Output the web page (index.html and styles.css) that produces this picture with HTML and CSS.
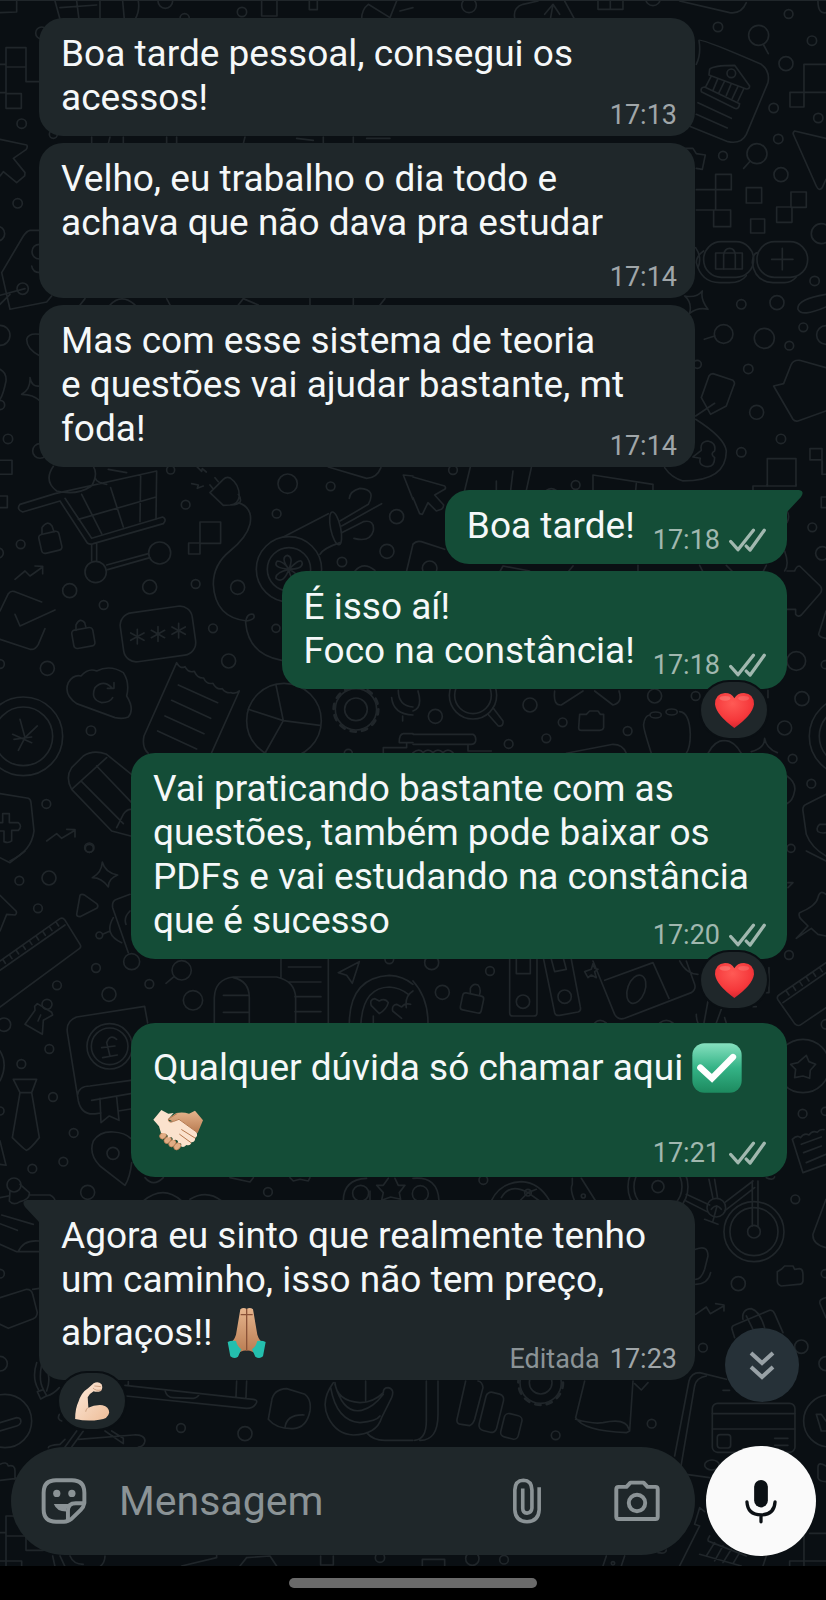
FILE: index.html
```html
<!DOCTYPE html>
<html lang="pt-BR">
<head>
<meta charset="utf-8">
<meta name="viewport" content="width=device-width, initial-scale=1">
<title>Conversa</title>
<link rel="stylesheet" href="styles.css">
</head>
<body>
<svg class="defs" width="0" height="0" aria-hidden="true">
  <defs>
    <linearGradient id="g-check" x1="0" y1="0" x2="0" y2="1"><stop offset="0" stop-color="#86e0bf"/><stop offset=".5" stop-color="#34b386"/><stop offset="1" stop-color="#1d8a5f"/></linearGradient>
    <radialGradient id="g-heart" cx=".45" cy=".3" r=".8"><stop offset="0" stop-color="#ff5a55"/><stop offset=".6" stop-color="#f5383b"/><stop offset="1" stop-color="#c81f2b"/></radialGradient>
    <linearGradient id="g-skin" x1="0" y1="0" x2="1" y2="1"><stop offset="0" stop-color="#fdeadb"/><stop offset="1" stop-color="#eebd98"/></linearGradient>
    <linearGradient id="g-tan" x1="0" y1="0" x2="0" y2="1"><stop offset="0" stop-color="#e6b58d"/><stop offset="1" stop-color="#b87a50"/></linearGradient>
    <symbol id="ticks" viewBox="946 198 118 76"><path d="M954 239L976 264L1023 205M1001 253L1013 265L1056 205" fill="none" stroke="currentColor" stroke-width="10" stroke-linecap="round" stroke-linejoin="round"/></symbol>
    <symbol id="heart" viewBox="0 0 117 105"><path fill="url(#g-heart)" d="M58 105Q4 66 0 34Q0 2 30 0Q50 0 58 16Q67 0 87 0Q117 2 117 34Q113 66 58 105Z"/><ellipse cx="30" cy="16" rx="16" ry="7" fill="#ff9a94" opacity=".4"/><ellipse cx="86" cy="16" rx="16" ry="7" fill="#ff9a94" opacity=".3"/></symbol>
  </defs>
</svg>

<div class="app">
  <svg class="wallpaper" viewBox="0 0 826 1600" preserveAspectRatio="xMidYMin slice" aria-hidden="true">
    <g transform="scale(.3333)">
      <path d="M0 35L50 33V0M165 0L180 55M230 0L237 55M300 0V55M368 0L373 55M180 20L290 12M415 0Q420 30 405 55M785 0V45H831V0M928 0V26H952V0M1085 55Q1085 25 1105 10L1170 50L1190 0M1200 30L1239 20M18 140H78V198H18ZM18 198V278H64V322H18V278M78 198V242H118M0 190H18M0 275H18M0 415L80 432Q84 438 78 446L40 472L75 515L74 525L50 545L10 512L0 525"/>
      <path d="M120 688H90Q80 690 70 705L5 815L30 925L140 903L155 885M0 883L75 863M30 880L0 910M95 795Q98 815 120 815M120 1065Q80 1045 80 1015Q85 995 120 1000M0 1105Q20 1115 18 1140Q10 1180 0 1195M90 1130Q95 1160 120 1155M90 1130Q92 1165 65 1180Q100 1180 120 1200M-10 1378H36V1420H-10"/>
      <path d="M275 408V428M330 408L325 428M370 408V428M500 408V428M530 408V428M735 408L730 428M890 412L940 418M970 408V428M1060 408V428M1100 412H1170M240 912L255 893M330 912Q365 875 405 912M500 893L510 912M715 912L730 893L775 912M930 893V912M1060 893V912M1140 912l15-19"/>
      <circle cx="496" cy="0" r="22"/><circle cx="554" cy="52" r="14"/><circle cx="726" cy="33" r="14"/><circle cx="125" cy="96" r="18"/><circle cx="65" cy="368" r="14"/><circle cx="160" cy="400" r="12"/><circle cx="53" cy="607" r="14"/><circle cx="-8" cy="698" r="22"/><circle cx="68" cy="863" r="17"/><circle cx="118" cy="752" r="22"/><circle cx="0" cy="1003" r="30"/><circle cx="0" cy="1212" r="14"/><circle cx="24" cy="1314" r="14"/><circle cx="120" cy="1350" r="22"/>
    </g>
    <g transform="translate(413 0) scale(.3333)">
      <path d="M305 50Q300 20 330 10L375 0M395 40L420 10L440 40M420 10L412 55M455 0L485 55M555 0V25H630V0M592 0V25M800 0L950 35Q985 40 1000 5M1215 0q0 40 24 35M1052 132L1066 158M1012 480L992 502M1239 190H1173V318H1131V274H1239M1239 412L1145 390Q1138 395 1142 402L1210 555Q1218 572 1228 560L1239 535"/>
      <path d="M850 190Q865 160 858 118Q865 112 1045 190Q1072 210 1065 245L1000 400Q985 430 945 422L828 375M890 205Q900 193 965 193L1010 255Q1010 265 1000 264L888 222ZM875 258L980 308q-2 18-15 14L865 272Q862 258 875 258ZM895 225L878 258M915 232L900 268M935 240L918 275M955 248L940 283M975 256L958 292M992 264L975 300M855 305L955 352M850 340L943 381"/>
      <path d="M815 442H840L850 458L877 462L868 505L850 502M908 520H955V566H850M908 520V627M850 627H902M902 627h51v50h-51zM1000 560h46v46h-46zM1134 573h46v46h-46zM1091 618h46v46h-46zM1013 654h42v42h-42z"/>
      <rect x="872" y="722" width="150" height="107" rx="53"/><rect x="1032" y="722" width="152" height="107" rx="53"/><rect x="908" y="756" width="80" height="48"/>
      <path d="M848 740Q868 770 855 800M872 750Q850 765 850 785Q865 845 920 845H950Q985 845 1000 824M932 804V762Q935 742 950 742Q965 742 967 762V804M1035 755Q1020 755 1018 785Q1025 842 1080 845H1115Q1135 845 1150 828M1076 775H1140M1108 742V806"/>
      <path d="M868 870Q862 895 885 925Q855 918 830 937Q838 905 815 885Q850 892 868 870ZM1239 880Q1150 895 1155 925Q1165 950 1239 918M905 1005L874 1015M900 1118L960 1138Q968 1145 962 1155L940 1215L893 1240L865 1190L888 1125Q892 1118 900 1118ZM905 1207L848 1245M1239 1100L1160 1078Q1142 1076 1135 1090L1112 1148L1082 1155L1140 1255Q1145 1262 1155 1260L1239 1230M848 1255Q935 1310 940 1350Q940 1440 810 1440Q775 1430 755 1400M840 1368L865 1348Q860 1322 885 1320Q910 1325 905 1350Q890 1358 905 1370Q905 1397 885 1397Q855 1395 862 1372ZM1063 1455V1373H1149V1455M1191 1343h36v34h-36zM1227 1377V1420H1239"/>
      <circle cx="168" cy="13" r="22"/><circle cx="720" cy="-8" r="22"/><circle cx="1127" cy="39" r="13"/><circle cx="915" cy="78" r="14"/><circle cx="1037" cy="103" r="30"/><circle cx="1197" cy="119" r="14"/><circle cx="1119" cy="188" r="21"/><circle cx="1082" cy="321" r="14"/><circle cx="1216" cy="351" r="14"/><circle cx="1096" cy="414" r="14"/><circle cx="930" cy="464" r="13"/><circle cx="1032" cy="458" r="30"/><circle cx="1104" cy="521" r="21"/><circle cx="955" cy="217" r="13"/><circle cx="1225" cy="698" r="30"/><circle cx="1205" cy="840" r="14"/><circle cx="985" cy="910" r="14"/><circle cx="1092" cy="905" r="21"/><circle cx="1171" cy="979" r="13"/><circle cx="932" cy="999" r="28"/><circle cx="1054" cy="1012" r="30"/><circle cx="1129" cy="1034" r="13"/><circle cx="1239" cy="1002" r="28"/><circle cx="1006" cy="1104" r="14"/><circle cx="853" cy="1090" r="12"/><circle cx="1031" cy="1234" r="21"/><circle cx="1104" cy="1314" r="14"/><circle cx="985" cy="1354" r="14"/>
    </g>
    <g transform="translate(0 460) scale(.3333)">
      <path d="M-10 105H22V140H-10M160 16Q130 60 170 90Q230 105 275 75Q295 40 280 16M285 50Q290 65 320 70M325 25L380 35M165 98L60 130Q48 145 68 153L180 120M165 98L470 30L468 175M180 120L262 246Q270 252 280 248L490 188Q502 175 488 168L275 232L195 112M245 100L305 218M332 80L370 198M422 45L420 182M235 175L468 108M275 250V300M290 248V298M320 312L445 278M323 326L450 290"/>
      <rect x="120" y="215" width="62" height="58" rx="10" transform="rotate(-13 151 244)"/><path d="M126 220V200Q142 176 156 195L162 212M45 355L75 330L90 345L128 318M105 315L128 316V338M0 450L25 398Q32 388 45 392L125 423M45 460L60 495L165 447M0 535L90 565Q105 568 115 550L135 503"/>
      <path d="M600 183h62v64h-62zM566 246h34v33h-34zM630 95L670 55Q680 45 692 52Q718 70 718 105Q715 130 690 132L670 133ZM638 82l-8-10M655 62l-10-12M715 100Q735 130 695 132M715 125Q760 140 750 190Q740 230 690 270Q640 310 640 370Q645 470 740 480Q770 475 760 460Q740 455 737 485Q745 580 845 598M575 68L595 72L592 82L610 75M590 16l15 15l2-8l12 10"/>
      <path d="M867 325Q840 290 862 283Q882 288 867 325Q905 285 907 308Q905 325 867 325Q905 345 888 358Q870 355 867 325Q850 370 828 352Q825 335 867 325Q815 320 832 300Q850 300 867 325M850 228L985 158M960 280Q970 262 1020 245M1020 180L1105 130Q1130 85 1080 82Q1050 90 1048 112M1025 195L1145 128M1025 215L1090 182Q1125 175 1120 210Q1110 245 1062 232M1065 330Q1090 300 1125 328M985 18L1100 52Q1130 52 1143 20M1239 45L1210 42L1239 115M1239 250L1220 330"/><ellipse cx="1007" cy="202" rx="15" ry="50" transform="rotate(-12 1007 202)"/>
      <rect x="218" y="503" width="64" height="56" rx="10" transform="rotate(-10 250 531)"/><path d="M228 508V492Q240 468 254 485L258 500"/><rect x="365" y="445" width="218" height="148" rx="38" transform="rotate(-8 474 519)"/>
      <path d="M412 505V549M392 516L432 538M392 538L432 516M474 497V541M454 508L494 530M454 530L494 508M536 487V531M516 498L556 520M516 520L556 498"/>
      <path d="M205 665Q220 640 243 645Q265 620 290 630Q330 610 370 635Q390 665 380 705Q405 745 385 768Q370 775 345 770L230 728Q190 700 205 665ZM335 680Q310 655 285 680Q270 715 305 725Q330 725 338 710M342 665V682H322M445 877Q425 860 432 825L530 605q10 20 25 12q10 20 28 14q10 22 28 20q8 20 28 16q10 20 28 16q10 14 26 12q14 5 25-5L635 875M535 672L653 725M515 718L632 772M495 765L612 818M473 810L590 864M828 672L850 779L745 745M850 779L960 793M850 779L797 873"/>
      <circle cx="852" cy="779" r="112"/><circle cx="1068" cy="745" r="34"/><circle cx="1068" cy="745" r="62"/><circle class="teeth" cx="1068" cy="745" r="67"/>
      <path d="M1175 710Q1180 760 1239 762M1195 688Q1195 735 1239 738M1208 765V780M1239 818H1210Q1197 820 1198 845H1239M1150 877V860H1220V845M60 775L75 830L112 795M75 830L55 868M38 820L95 845M42 835L95 828M400 945L320 880Q280 865 250 885L215 920Q195 950 215 985L335 1110L392 1125M215 985L320 890M290 915L395 1025M245 962L370 1088M350 1100L370 1060Q380 1045 392 1045M0 998L85 1012Q92 1015 93 1025L102 1110Q95 1170 30 1200M0 1085H8V1058H28V1085H55Q68 1095 55 1108H35V1140Q25 1148 12 1142V1110H0M140 1140L170 1118L185 1132L225 1108M200 1105L225 1106V1128"/>
      <circle cx="70" cy="826" r="118"/><circle cx="70" cy="826" r="88"/><circle cx="287" cy="333" r="32"/><circle cx="479" cy="276" r="33"/><circle cx="62" cy="250" r="13"/><circle cx="-5" cy="276" r="15"/><circle cx="867" cy="325" r="98"/><circle cx="867" cy="325" r="65"/><circle cx="209" cy="389" r="21"/><circle cx="311" cy="432" r="13"/><circle cx="449" cy="378" r="21"/><circle cx="587" cy="369" r="13"/><circle cx="713" cy="379" r="21"/><circle cx="557" cy="131" r="13"/><circle cx="512" cy="27" r="12"/><circle cx="863" cy="68" r="29"/><circle cx="992" cy="76" r="13"/><circle cx="830" cy="158" r="13"/><circle cx="1190" cy="167" r="21"/><circle cx="1161" cy="271" r="21"/><circle cx="1026" cy="303" r="14"/><circle cx="639" cy="502" r="13"/><circle cx="686" cy="600" r="21"/><circle cx="828" cy="502" r="12"/><circle cx="142" cy="622" r="21"/><circle cx="0" cy="609" r="13"/><circle cx="273" cy="809" r="14"/><circle cx="139" cy="1029" r="13"/><circle cx="268" cy="1160" r="14"/><circle cx="1045" cy="877" r="12"/>
    </g>
    <g transform="translate(413 460) scale(.3333)">
      <path d="M0 48L95 75Q100 80 95 85L65 102L92 132Q92 140 85 145L70 150L45 125L28 160L20 158L0 110M155 88L172 18M250 60V88M300 30L293 88M355 20L340 88M540 88V42L720 70V88M670 68L668 88M400 88q15-10 30 0M1149 70V75H1020V88M1063 70V75M1228 0V40M1239 108H1225V140H1239M1122 150q10 15 0 35M0 250Q10 238 25 242L95 265M260 333L270 315L350 330M465 333L480 315M675 313V333M860 313l10 20M940 313l20 20M1060 313l-10 20M1115 270q15 40 0 60M1122 330H1145Q1150 315 1160 315L1222 375Q1230 385 1222 397L1165 462Q1155 470 1148 460V445H1122M1239 450L1217 520Q1220 530 1239 532"/>
      <path d="M15 690Q30 740 0 750M240 740L270 780Q272 797 256 795L225 760M425 690Q420 735 445 732L510 690M545 690L600 732Q630 725 618 690M500 760H520L530 750H555L562 760H572V800Q570 808 560 808H505Q497 808 497 800ZM0 820H180Q190 825 188 840Q185 852 170 850H0M0 875q20-15 30 0q15-15 30 0q15-15 30 0q15-15 30 0M165 852V870H235M460 877L600 850Q630 850 640 877M715 877Q690 800 692 790Q695 765 710 762M800 752Q830 755 832 820Q832 860 820 877M885 877Q905 838 935 838Q965 840 985 877M1015 872Q1055 862 1055 832Q1060 862 1093 875M1065 688V710M1122 945Q1150 965 1145 990Q1140 1020 1122 1028M1239 1000L1180 1030Q1168 1035 1170 1050L1180 1120Q1195 1160 1239 1185M1239 1090H1220Q1208 1100 1215 1112Q1225 1118 1239 1115"/>
      <ellipse cx="728" cy="762" rx="17" ry="9"/><ellipse cx="776" cy="753" rx="17" ry="9"/><circle cx="180" cy="703" r="71"/><circle cx="180" cy="703" r="55"/><circle cx="120" cy="27" r="13"/><circle cx="488" cy="72" r="13"/><circle cx="1198" cy="199" r="13"/><circle cx="1228" cy="277" r="20"/><circle cx="50" cy="322" r="22"/><circle cx="1150" cy="600" r="28"/><circle cx="1237" cy="611" r="12"/><circle cx="351" cy="732" r="21"/><circle cx="67" cy="766" r="21"/><circle cx="449" cy="784" r="13"/><circle cx="400" cy="832" r="13"/><circle cx="287" cy="849" r="13"/><circle cx="644" cy="810" r="13"/><circle cx="725" cy="705" r="21"/><circle cx="848" cy="705" r="13"/><circle cx="1115" cy="801" r="21"/><circle cx="1167" cy="713" r="21"/><circle cx="1139" cy="893" r="13"/><circle cx="1307" cy="826" r="118"/><circle cx="1307" cy="826" r="88"/><circle cx="1195" cy="968" r="13"/><circle cx="1134" cy="1162" r="12"/>
    </g>
    <g transform="translate(0 850) scale(.3333)">
      <path d="M0 20L30 35L75 0M307 33Q315 65 353 72Q325 82 325 108Q305 80 277 80Q305 65 307 33ZM240 133Q245 127 255 133L290 158Q297 165 290 172L240 197Q230 197 230 190ZM0 133L48 180Q52 188 45 192L20 190L0 240M0 330L180 203Q188 198 194 206L240 280Q245 288 238 293L0 468M0 358L195 222M8 325l8 12M28 311l8 12M48 297l8 12M68 283l8 12M88 269l8 12M108 255l8 12M128 241l8 12M148 227l8 12M168 213l8 12"/>
      <path d="M390 130L350 145Q335 150 338 170L385 305M308 250L330 240M340 200Q310 250 365 275M390 180Q370 200 378 220M522 377L498 397M75 520L105 478L104 466L112 458L155 484L158 492L130 508L127 550ZM122 492l-8 18M443 516L434 466L230 498Q195 510 203 550L235 750Q245 795 290 788L303 786M355 780L392 774M232 735Q235 705 270 705L392 688M275 748L392 728M300 742L303 815L328 795L357 808L350 738M350 565Q330 548 320 575L330 615M305 590L345 585M308 620L352 612M40 685H110L95 725H60ZM60 725L37 860Q75 898 80 898Q90 895 118 860L95 725M0 600Q25 640 0 690M0 870L18 943L0 940M395 935Q390 980 375 1003L300 945Q265 910 280 870Q300 840 340 843Q375 845 392 862"/>
      <path d="M30 1020L28 1050Q40 1065 60 1052Q90 1045 88 1025L60 1000M88 1032H150Q165 1040 165 1050M0 1040L25 1035M430 1050Q490 1000 545 1050M570 1045Q620 1015 665 1050M435 980Q460 1010 490 980M690 980L750 993L760 980M870 980L880 990L900 985L925 990L930 980M1030 1050Q1030 985 1100 982M1110 1050V1020M1165 982L1150 1003H1130L1150 1025L1145 1048L1172 1038L1202 1045L1198 1025L1215 1003H1195L1185 982"/>
      <path d="M843 325V378M985 325V516M865 348H963M865 393H963M885 437H963M885 482H963M643 516V440Q645 385 700 378H830Q885 390 887 440V516M700 380Q748 390 748 440V516M670 433H748M670 484H748M1078 332L1015 365L1040 373L1057 397ZM1048 516Q1050 380 1168 373Q1210 375 1239 400M1083 516Q1090 410 1168 408Q1200 410 1225 430M1138 488L1114 464Q1108 445 1125 443L1138 450Q1155 440 1165 455Q1160 475 1138 488ZM1205 502L1178 480Q1175 462 1190 460L1205 468Q1215 455 1232 460M1120 495v20M1239 420q-25 15-20 50"/>
      <circle cx="268" cy="-8" r="12"/><circle cx="58" cy="89" r="13"/><circle cx="147" cy="81" r="21"/><circle cx="114" cy="172" r="13"/><circle cx="298" cy="253" r="10"/><circle cx="395" cy="332" r="24"/><circle cx="288" cy="351" r="13"/><circle cx="171" cy="403" r="13"/><circle cx="327" cy="430" r="21"/><circle cx="448" cy="399" r="13"/><circle cx="545" cy="358" r="29"/><circle cx="579" cy="448" r="29"/><circle cx="12" cy="521" r="20"/><circle cx="141" cy="460" r="15"/><circle cx="329" cy="586" r="68"/><circle cx="329" cy="586" r="55"/><circle cx="148" cy="594" r="13"/><circle cx="64" cy="639" r="13"/><circle cx="159" cy="738" r="13"/><circle cx="0" cy="780" r="12"/><circle cx="221" cy="846" r="13"/><circle cx="190" cy="932" r="13"/><circle cx="97" cy="953" r="13"/><circle cx="339" cy="907" r="18"/><circle cx="263" cy="1024" r="21"/><circle cx="804" cy="1023" r="13"/><circle cx="42" cy="1002" r="21"/><circle cx="1082" cy="1027" r="24"/><circle cx="1168" cy="325" r="13"/>
    </g>
    <g transform="translate(413 850) scale(.3333)">
      <path d="M1125 95H1140L1125 110M1180 0L1239 30M1239 130Q1220 115 1215 140Q1210 165 1160 185Q1155 195 1165 205L1185 225L1150 262L1195 232L1215 250L1239 255M1239 335L1098 432Q1090 438 1095 446L1145 518Q1155 528 1165 520L1239 470M1110 455L1239 365M1120 420l8 12M1140 406l8 12M1160 392l8 12M1180 378l8 12M1200 364l8 12M1220 350l8 12M1180 613L1188 632L1208 640L1192 658L1190 682L1170 675L1145 680L1148 655L1133 640L1155 635ZM1239 940L1170 965L1138 865q15-15 25-5q10-15 25-8q10-15 25-8q8-10 20-8M1165 880L1225 858M1172 905L1225 885M1180 935L1239 910M1239 1045L1200 1150Q1198 1180 1239 1190"/>
      <rect x="145" y="430" width="64" height="52" rx="9" transform="rotate(12 177 456)"/><path d="M172 425V412Q180 395 195 402Q205 412 200 430M0 390Q45 440 45 516M290 325V485Q290 495 300 495H362Q372 495 372 485V325M310 325V368H352V325M392 325L425 485Q428 495 440 493L495 483Q505 480 502 468L475 325M415 325L425 362L460 355L452 325M515 362L535 355L540 338L545 352L555 355L545 362L550 380L535 372L525 380ZM540 330L605 490Q615 508 635 502L835 425Q850 415 845 400L820 330M575 388L720 335L768 442M800 330Q820 370 855 370M1068 350V425H1058M850 490Q850 505 855 516M885 450L873 516M925 475L910 516M935 500l5 16M545 516Q560 500 580 516M740 516Q760 500 780 516M1020 467h10"/><ellipse cx="670" cy="415" rx="26" ry="44" transform="rotate(20 670 415)"/>
      <path d="M0 982Q75 975 78 1050M235 1050Q260 995 325 992Q380 995 410 1050M265 1040Q290 995 345 1025L370 1015M345 1025L320 1050M345 1025L380 1050M478 982V1000Q470 1015 485 1050M505 982L548 1050M820 1030L890 1062M815 1048L882 1082M888 985L900 1042M905 985L914 1042M935 1055L1020 990M935 1080L1025 1010M1018 990V1125M1035 990V1125M912 1065L900 1110M875 1105L915 1120M895 1075Q910 1055 925 1075M1060 980q20 10 25-2"/>
      <circle cx="1128" cy="312" r="13"/><circle cx="1239" cy="520" r="14"/><circle cx="1170" cy="645" r="80"/><circle cx="1169" cy="788" r="13"/><circle cx="1237" cy="781" r="12"/><circle cx="1147" cy="1045" r="13"/><circle cx="56" cy="335" r="21"/><circle cx="88" cy="424" r="21"/><circle cx="231" cy="360" r="13"/><circle cx="330" cy="452" r="20"/><circle cx="455" cy="437" r="20"/><circle cx="22" cy="1028" r="24"/><circle cx="211" cy="987" r="13"/><circle cx="345" cy="1025" r="10"/><circle cx="511" cy="1035" r="6"/><circle cx="735" cy="1007" r="90"/><circle cx="735" cy="1007" r="72"/><circle cx="735" cy="1007" r="18"/><circle cx="910" cy="1070" r="28"/><circle cx="1023" cy="1142" r="90"/><circle cx="1023" cy="1142" r="72"/><circle cx="1023" cy="1142" r="19"/>
    </g>
    <g transform="translate(0 1200) scale(.3333)">
      <path d="M5 42L100 70M0 68L52 88M0 130L50 152H118M55 152Q70 115 118 120M0 290L80 265Q95 265 98 280L112 335Q110 350 100 353L25 382L0 370M98 265L118 262M110 485Q95 530 115 565M125 490Q115 540 130 565M145 520Q150 545 140 570M140 585Q160 580 178 560M112 572l18-6l10 18l-18 10zM0 665L50 650Q65 650 62 665Q60 672 50 675L0 690M178 640Q170 655 185 660M230 690L195 738M250 690L215 738M315 690L370 728V712L335 690M145 740Q145 732 180 730L195 715M235 715L400 702Q435 700 435 720Q432 738 415 738M375 553L760 595Q775 597 768 608Q760 622 740 622L378 585M495 568Q500 590 520 590L580 592Q595 590 598 578M385 542V552M710 540L708 588M740 540L738 590"/>
      <path d="M815 600Q820 565 860 563L915 580Q935 595 930 630Q920 680 880 683Q830 685 805 655ZM855 680Q860 640 912 642M1000 545Q960 600 985 650Q1010 700 1060 702Q1130 700 1145 650L1175 590Q1185 565 1165 560Q1150 560 1150 575Q1120 605 1080 605Q1010 600 1005 545M992 560Q1010 660 1080 665Q1130 660 1140 645M1005 550Q1030 640 1085 628Q1120 620 1150 580M1097 540V600M1100 695Q1120 720 1160 718H1239M0 790Q20 780 25 795Q45 790 45 810V835M0 838L50 832M40 945H18V1095M18 1005H78V1048H130M0 995H18M0 1080H65V1095M158 1065L165 1097M180 1065L195 1097M210 1065Q220 1090 250 1090M315 1065Q315 1085 300 1097M545 1095L650 1070V1060M720 1095L740 1070L810 1065L830 1095M962 1065V1092H1000V1065"/>
      <circle cx="0" cy="218" r="13"/><circle cx="0" cy="488" r="22"/><circle cx="15" cy="660" r="80"/><circle cx="543" cy="681" r="13"/><circle cx="735" cy="698" r="21"/><circle cx="1140" cy="1070" r="14"/>
    </g>
    <g transform="translate(413 1200) scale(.3333)">
      <path d="M848 145Q885 130 885 165L875 205Q865 235 848 235M848 250Q885 250 893 215M1105 205L1115 195H1140L1145 205L1160 203Q1170 205 1170 220V240Q1168 252 1155 250L1105 255Q1093 250 1093 240V212ZM848 340L880 318L892 338L932 315M908 308L933 312V330M965 410L957 385Q955 375 965 372L1070 328Q1080 326 1085 338L1110 395M990 355Q985 325 1015 323Q1040 330 1055 380M1000 345L1020 385M1239 290Q1215 295 1222 310L1239 350M940 535L860 515Q835 515 828 540L785 765M880 525Q850 530 845 555L805 790Q803 815 820 820L890 830M930 568H950M898 638H1146M898 684H1146M1085 712H1125M1085 733H1125M1239 690H1225L1210 640H1225L1239 660M1239 795Q1215 780 1215 800V830Q1218 842 1239 842"/>
      <rect x="898" y="607" width="248" height="147" rx="16"/><rect x="913" y="701" width="40" height="40" rx="8"/><rect x="208" y="575" width="54" height="118" rx="16" transform="rotate(14 235 634)"/><rect x="268" y="640" width="54" height="72" rx="14" transform="rotate(14 295 676)"/><ellipse cx="897" cy="792" rx="22" ry="15"/>
      <path d="M40 540V660Q40 715 5 718M75 540V640Q75 720 20 718M158 540L132 655Q130 670 145 670L170 674Q180 670 185 655L210 560Q208 542 195 540M515 540L488 650Q510 690 640 695L650 690L660 540M488 655Q540 670 570 665Q640 650 648 685M665 548L685 567L705 545M800 1095L860 975L845 970L860 920L875 932M860 1060L985 1095M890 1005Q880 1020 890 1022L1000 1065M905 1025L880 1065M930 1035L905 1080M955 1045L930 1085M980 1055L960 1088M1060 1065L1050 1095M1173 990V1095M1130 1095V1080H1239M1190 997H1239M28 1095V1075H95V1095M580 1065L570 1095M635 1065L625 1095M735 1055q25 5 25-8"/>
      <circle cx="976" cy="248" r="21"/><circle cx="1237" cy="218" r="12"/><circle cx="870" cy="440" r="13"/><circle cx="1165" cy="437" r="20"/><circle cx="1239" cy="488" r="21"/><circle cx="1250" cy="660" r="78"/><circle cx="383" cy="545" r="34"/><circle cx="383" cy="545" r="62"/><circle class="teeth" cx="383" cy="545" r="67"/><circle cx="428" cy="703" r="13"/><circle cx="716" cy="668" r="13"/><circle cx="178" cy="1073" r="20"/><circle cx="273" cy="1076" r="13"/><circle cx="600" cy="1087" r="5"/>
    </g>
  </svg>

  <main class="chat">
    <article class="message message--in">
      <div class="bubble bubble--wide">
        <p class="text">Boa tarde pessoal, consegui os<br>acessos!</p>
        <div class="meta"><time>17:13</time></div>
      </div>
    </article>
    <article class="message message--in">
      <div class="bubble bubble--wide">
        <p class="text text--meta-below">Velho, eu trabalho o dia todo e<br>achava que não dava pra estudar</p>
        <div class="meta"><time>17:14</time></div>
      </div>
    </article>
    <article class="message message--in">
      <div class="bubble bubble--wide">
        <p class="text">Mas com esse sistema de teoria<br>e questões vai ajudar bastante, mt<br>foda!</p>
        <div class="meta"><time>17:14</time></div>
      </div>
    </article>

    <article class="message message--out message--first">
      <div class="bubble bubble--inline bubble--tail">
        <svg class="tail" viewBox="0 0 42 24" aria-hidden="true"><path d="M0 0H38Q44 1 40 7L26 22V24H0Z"/></svg>
        <p class="text">Boa tarde!</p>
        <div class="meta"><time>17:18</time><svg class="ticks" role="img" aria-label="Entregue"><use href="#ticks"/></svg></div>
      </div>
    </article>
    <article class="message message--out">
      <div class="bubble bubble--inline">
        <p class="text">É isso aí!<br>Foco na constância!</p>
        <div class="meta"><time>17:18</time><svg class="ticks" role="img" aria-label="Entregue"><use href="#ticks"/></svg></div>
      </div>
      <button class="reaction" type="button" aria-label="Reação: coração"><svg class="reaction__heart"><use href="#heart"/></svg></button>
    </article>
    <article class="message message--out message--after-reaction">
      <div class="bubble bubble--wide">
        <p class="text">Vai praticando bastante com as<br>questões, também pode baixar os<br>PDFs e vai estudando na constância<br>que é sucesso</p>
        <div class="meta"><time>17:20</time><svg class="ticks" role="img" aria-label="Entregue"><use href="#ticks"/></svg></div>
      </div>
      <button class="reaction" type="button" aria-label="Reação: coração"><svg class="reaction__heart"><use href="#heart"/></svg></button>
    </article>
    <article class="message message--out message--after-reaction">
      <div class="bubble bubble--wide">
        <p class="text">Qualquer dúvida só chamar aqui <svg class="emoji" viewBox="0 0 150 150" role="img" aria-label="Marca de verificação"><rect x="1" y="1" width="148" height="148" rx="36" fill="url(#g-check)"/><path d="M25 74L60 106L123 42" fill="none" stroke="#fff" stroke-width="19" stroke-linecap="round"/></svg><br><svg class="emoji" viewBox="0 0 150 150" role="img" aria-label="Aperto de mãos">
          <path fill="url(#g-tan)" d="M150 46L126 17L108 26Q90 20 70 24L44 42L134 84Z"/>
          <g fill="#e2ad84" stroke="#b5784e" stroke-width="2"><ellipse cx="30" cy="92" rx="11" ry="9" transform="rotate(-45 30 92)"/><ellipse cx="44" cy="105" rx="12" ry="9" transform="rotate(-45 44 105)"/><ellipse cx="58" cy="115" rx="12" ry="9" transform="rotate(-45 58 115)"/><ellipse cx="73" cy="124" rx="12" ry="9" transform="rotate(-45 73 124)"/></g>
          <path fill="#fbe2cd" d="M1 44L25 15L46 26L62 24L46 42Q46 54 62 48L78 42L130 80Q136 94 126 99Q128 111 115 112Q113 124 100 120Q92 130 84 124Q88 112 76 114Q74 100 60 106Q58 92 46 98Q44 82 24 84L18 64Z"/>
          <path fill="none" stroke="#b5784e" stroke-width="3" stroke-linecap="round" d="M72 26L46 42Q46 56 62 49L78 43L132 82M86 74L126 99M80 88L114 113"/>
        </svg></p>
        <div class="meta"><time>17:21</time><svg class="ticks" role="img" aria-label="Entregue"><use href="#ticks"/></svg></div>
      </div>
    </article>

    <article class="message message--in message--first">
      <div class="bubble bubble--wide bubble--tail">
        <svg class="tail" viewBox="0 0 42 24" aria-hidden="true"><path d="M42 0H4Q-2 1 2 7L16 22V24H42Z"/></svg>
        <p class="text">Agora eu sinto que realmente tenho<br>um caminho, isso não tem preço,<br>abraços!! <svg class="emoji" viewBox="0 0 150 150" role="img" aria-label="Mãos unidas">
          <path fill="url(#g-tan)" d="M55 4Q64-3 74 3Q84-3 93 4L106 80Q112 100 128 108L104 140Q88 126 74 128Q60 126 44 140L20 108Q36 100 42 80Z"/>
          <path fill="none" stroke="#8a5238" stroke-width="4" d="M74 3V128M56 20H92"/>
          <path fill="#24bfae" d="M17 102Q28 96 42 99Q46 116 58 124L48 146Q36 154 25 145ZM131 102Q120 96 106 99Q102 116 90 124L100 146Q112 154 123 145Z"/>
        </svg></p>
        <div class="meta"><span class="edited">Editada</span><time>17:23</time></div>
      </div>
      <button class="reaction" type="button" aria-label="Reação: bíceps flexionado"><svg class="reaction__arm" viewBox="0 0 106 118"><path fill="url(#g-skin)" d="M2 112Q2 80 12 60Q20 32 42 18L58 4Q72-3 82 7Q87 20 80 27Q68 32 58 28Q44 36 40 46L42 78Q60 68 85 70Q104 74 105 92Q102 112 75 114Q40 120 2 112Z"/><path fill="none" stroke="#b98766" stroke-width="2" d="M56 18Q64 28 82 24M60 12L80 14M40 78Q34 84 34 90"/></svg></button>
    </article>
  </main>

  <button class="scroll-down" type="button" aria-label="Ir para o fim da conversa"><svg viewBox="0 0 28 32"><path d="M3 4L14 14L25 4M3 18L14 28L25 18"/></svg></button>

  <footer class="composer">
    <div class="field">
      <button class="icon-button" type="button" aria-label="Figurinhas"><svg viewBox="122 832 140 140"><g fill="none" stroke="currentColor" stroke-width="12" stroke-linejoin="round"><path d="M168 839H216Q254 839 254 877V908Q252 920 243 929L214 957Q205 965 192 965H168Q130 965 130 927V877Q130 839 168 839Z"/><path d="M254 909H228Q204 909 204 931V965"/></g><circle cx="170" cy="879" r="11" fill="currentColor"/><circle cx="216" cy="879" r="11" fill="currentColor"/><path fill="currentColor" d="M161 911H212Q200 918 198 934Q170 934 161 911Z"/></svg></button>
      <input class="field__input" type="text" placeholder="Mensagem" aria-label="Mensagem">
      <button class="icon-button" type="button" aria-label="Anexar"><svg viewBox="274 832 140 140"><path fill="none" stroke="currentColor" stroke-width="11" d="M381 860V929Q379 964 344 965Q309 964 307 929V868Q308 840 333 839Q358 840 359 868V924Q358 938 344 939Q331 938 331 924V864"/></svg></button>
      <button class="icon-button" type="button" aria-label="Câmera"><svg viewBox="602 832 140 140"><g fill="none" stroke="currentColor" stroke-width="12" stroke-linejoin="round"><path d="M616 859H640L652 846H692L704 859H728Q735 859 735 866V950Q735 957 728 957H616Q609 957 609 950V866Q609 859 616 859Z"/><circle cx="672" cy="908" r="25"/></g></svg></button>
    </div>
    <button class="mic" type="button" aria-label="Gravar mensagem de voz"><svg viewBox="992 830 104 136"><rect x="1023" y="832" width="42" height="84" rx="21" fill="currentColor"/><path d="M1001 899Q1003 938 1044 939Q1085 938 1087 899M1044 939V960" fill="none" stroke="currentColor" stroke-width="10" stroke-linecap="round"/></svg></button>
  </footer>
  <div class="gesture-bar"><span class="gesture-bar__handle"></span></div>
</div>
</body>
</html>
```
FILE: styles.css
```css
:root {
  --bg: #0a0f13;
  --doodle: #20262a;
  --in: #1f272a;
  --out: #144d37;
  --muted: #8b9396;
}

* { box-sizing: border-box; }

body {
  margin: 0;
  background: #000;
  color: #f5f8f9;
  font-family: Roboto, "Liberation Sans", sans-serif;
}

button {
  padding: 0;
  border: 0;
  background: none;
  color: inherit;
  font: inherit;
  cursor: pointer;
}

svg { display: block; }

.defs { position: absolute; }

.app {
  position: relative;
  display: flex;
  flex-direction: column;
  min-height: 100vh;
  background: var(--bg);
  border-top: 1px solid var(--doodle);
  overflow: hidden;
}

.wallpaper {
  position: absolute;
  inset: 0;
  width: 100%;
  height: 100%;
  fill: none;
  stroke: var(--doodle);
  stroke-width: 5;
  stroke-linecap: round;
  stroke-linejoin: round;
}

.teeth {
  stroke-width: 8;
  stroke-dasharray: 16 19;
}

.chat {
  position: relative;
  flex: 1;
  display: flex;
  flex-direction: column;
  gap: 7px;
  padding: 17px 39px 15px;
}

.message {
  display: flex;
  flex-direction: column;
  align-items: flex-start;
}

.message--out { align-items: flex-end; }
.message--first { margin-top: 16px; }
.message--after-reaction { margin-top: 8px; }

.bubble {
  position: relative;
  display: grid;
  padding: 14px 18px 16px 22px;
  border-radius: 24px;
  background: var(--in);
}

.message--out .bubble {
  padding-right: 20px;
  background: var(--out);
}

.bubble--wide { width: min(100%, 656px); }
.bubble--wide .text,
.bubble--wide .meta { grid-area: 1 / 1; }

.bubble--inline {
  grid-template-columns: auto auto;
  column-gap: 18px;
}

.message--in .bubble--tail { border-top-left-radius: 0; }
.message--out .bubble--tail { border-top-right-radius: 0; }

.tail {
  position: absolute;
  top: 0;
  width: 42px;
  height: 24px;
}

.message--in .tail { left: -16px; fill: var(--in); }
.message--out .tail { right: -16px; fill: var(--out); }

.text {
  position: relative;
  margin: 0;
  font-size: 37px;
  line-height: 44px;
}

.text--meta-below { padding-bottom: 37px; }

.emoji {
  display: inline-block;
  width: 50px;
  height: 50px;
  margin: 6px 0;
  vertical-align: -19px;
}

.meta {
  position: relative;
  align-self: end;
  justify-self: end;
  display: flex;
  align-items: center;
  gap: 10px;
  margin-bottom: -11px;
  color: #a0a6a9;
  font-size: 27px;
  line-height: 32px;
}

.message--out .meta {
  gap: 8px;
  margin-bottom: -8px;
  color: #a1b8af;
}

.edited { color: var(--muted); }

.ticks {
  width: 39px;
  height: 25px;
}

.reaction {
  position: relative;
  display: flex;
  align-items: center;
  justify-content: center;
  width: 66px;
  height: 56px;
  margin: -7px 20px 0;
  border-radius: 28px;
  background: var(--in);
  box-shadow: 0 0 0 2px var(--bg);
}

.reaction__heart { width: 39px; height: 35px; }
.reaction__arm { width: 36px; height: 39px; }

.scroll-down {
  position: absolute;
  right: 27px;
  bottom: 198px;
  display: flex;
  align-items: center;
  justify-content: center;
  width: 74px;
  height: 74px;
  border-radius: 50%;
  background: #263138;
}

.scroll-down svg {
  width: 28px;
  height: 32px;
  fill: none;
  stroke: #98a1a6;
  stroke-width: 4;
}

.composer {
  position: relative;
  display: flex;
  align-items: center;
  gap: 11px;
  padding: 0 10px 10px 11px;
}

.field {
  flex: 1;
  display: flex;
  align-items: center;
  min-width: 0;
  height: 108px;
  padding: 0 35px 0 30px;
  border-radius: 54px;
  background: var(--in);
}

.icon-button {
  flex: none;
  color: var(--muted);
}

.icon-button svg {
  width: 46px;
  height: 46px;
}

.icon-button + .icon-button { margin-left: 64px; }

.field__input {
  flex: 1;
  min-width: 0;
  margin: 0 32px;
  padding: 0;
  border: 0;
  outline: 0;
  background: none;
  color: inherit;
  font: 41px/48px Roboto, "Liberation Sans", sans-serif;
}

.field__input::placeholder {
  color: var(--muted);
  opacity: 1;
}

.mic {
  flex: none;
  display: flex;
  align-items: center;
  justify-content: center;
  width: 110px;
  height: 110px;
  border-radius: 50%;
  background: #fafafa;
  color: #0b1014;
}

.mic svg {
  width: 34px;
  height: 45px;
}

.gesture-bar {
  position: relative;
  display: flex;
  align-items: center;
  justify-content: center;
  height: 34px;
  background: #000;
}

.gesture-bar__handle {
  width: 30%;
  height: 10px;
  border-radius: 5px;
  background: #6a6a6a;
}
```
